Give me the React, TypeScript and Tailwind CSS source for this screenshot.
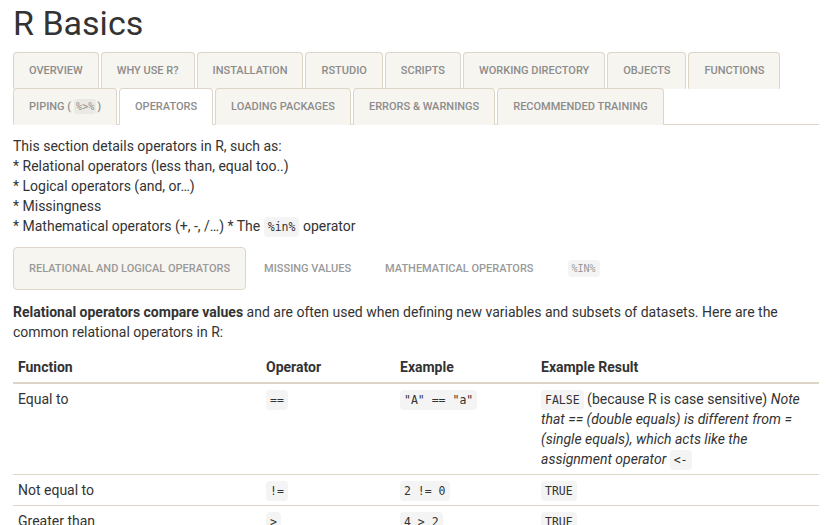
import React from "react"

const tabBase =
  "block border border-b-transparent rounded-t-[4px] px-[15px] py-[10px] leading-[15px] text-[11px] font-medium uppercase whitespace-nowrap"
const codeClass =
  "rounded-[4px] bg-[#f4f4f4] px-[4px] py-[3px] leading-none text-[11.5px] text-[#333] [font-family:'DejaVu_Sans_Mono',monospace]"

const topTabs = [
  "Overview",
  "Why use R?",
  "Installation",
  "RStudio",
  "Scripts",
  "Working directory",
  "Objects",
  "Functions",
]
const secondTabs = ["Operators", "Loading packages", "Errors & warnings", "Recommended training"]

const Code = ({ children, className = "" }: { children: React.ReactNode; className?: string }) => (
  <code className={codeClass + " " + className}>{children}</code>
)

const Tab = ({ label, active = false }: { label: React.ReactNode; active?: boolean }) => (
  <li className="mb-[-1px] mr-[2px]">
    <a
      className={
        tabBase +
        (active
          ? " bg-white border-[#ddd5c8] border-b-white text-[#8c8c8c]"
          : " bg-[#f7f5f0] border-[#ddd5c8] border-b-transparent text-[#8c8c8c]")
      }>
      {label}
    </a>
  </li>
)

const rows = [
  {
    fn: "Equal to",
    op: "==",
    ex: '"A" == "a"',
    result: (
      <>
        <Code className="text-[#4b3f72]">FALSE</Code> (because R is case sensitive){" "}
        <em>
          Note that == (double equals) is different from = (single equals), which acts like the
          assignment operator <Code>{"<-"}</Code>
        </em>
      </>
    ),
  },
  { fn: "Not equal to", op: "!=", ex: "2 != 0", result: <Code>TRUE</Code> },
  { fn: "Greater than", op: ">", ex: "4 > 2", result: <Code>TRUE</Code> },
]

export default function App() {
  return (
    <div className="px-[13px] pt-[5px] text-[14px] leading-[20px] text-[#333] [font-family:Roboto,'Liberation_Sans',sans-serif]">
      <h1 className="text-[34px] leading-[37px] font-normal text-[#333]">R Basics</h1>

      <ul className="mt-[10px] flex flex-wrap border-b border-[#ddd5c8]">
        {topTabs.map((t) => (
          <Tab key={t} label={t} />
        ))}
        <li className="basis-full h-0" />
        <Tab
          label={
            <>
              Piping (
              <code className="ml-[3px] rounded-[3px] bg-[#ebe9e4] px-[2px] py-[2px] leading-none text-[10px] normal-case font-normal [font-family:'DejaVu_Sans_Mono',monospace]">
                %&gt;%
              </code>
              <span className="ml-[1px]">)</span>
            </>
          }
        />
        {secondTabs.map((t) => (
          <Tab key={t} label={t} active={t === "Operators"} />
        ))}
      </ul>

      <p className="mt-[11px]">
        This section details operators in R, such as:
        <br />* Relational operators (less than, equal too..)
        <br />* Logical operators (and, or…)
        <br />* Missingness
        <br />* Mathematical operators (+, -, /…) * The <Code>%in%</Code> operator
      </p>

      <ul className="mt-[11px] flex">
        {["Relational and logical operators", "Missing values", "Mathematical operators"].map((p, i) => (
          <li key={p} className={i > 0 ? "ml-[2px]" : ""}>
            <a
              className={
                "block rounded-[4px] border px-[15px] py-[14px] leading-[13px] text-[11px] font-medium uppercase text-[#999] " +
                (i === 0 ? "border-[#ddd5c8] bg-[#f7f5f0]" : "border-transparent")
              }>
              {p}
            </a>
          </li>
        ))}
        <li className="ml-[2px]">
          <a className="block rounded-[4px] border border-transparent px-[15px] py-[14px] leading-[13px] text-[11px] uppercase text-[#999]">
            <code className="rounded-[4px] bg-[#f4f4f4] px-[4px] py-[3px] text-[10px] [font-family:'DejaVu_Sans_Mono',monospace]">
              %IN%
            </code>
          </a>
        </li>
      </ul>

      <p className="mt-[12px]">
        <strong className="font-bold">Relational operators compare values</strong> and are often used
        when defining new variables and subsets of datasets. Here are the common relational operators
        in R:
      </p>

      <table className="mt-[9px] w-full border-collapse table-fixed">
        <colgroup>
          <col className="w-[248px]" />
          <col className="w-[134px]" />
          <col className="w-[141px]" />
          <col />
        </colgroup>
        <thead>
          <tr className="border-b-2 border-[#ddd5c8] text-left">
            {["Function", "Operator", "Example", "Example Result"].map((h) => (
              <th key={h} className="px-[5px] pt-[6px] pb-[5px] font-bold">
                {h}
              </th>
            ))}
          </tr>
        </thead>
        <tbody>
          {rows.map((r) => (
            <tr key={r.fn} className="border-b border-[#ddd5c8] align-top">
              <td className="px-[5px] py-[5px]">{r.fn}</td>
              <td className="px-[5px] py-[5px]">
                <Code>{r.op}</Code>
              </td>
              <td className="px-[5px] py-[5px]">
                <Code className="whitespace-pre">{r.ex}</Code>
              </td>
              <td className="px-[5px] py-[5px]">{r.result}</td>
            </tr>
          ))}
        </tbody>
      </table>
    </div>
  )
}
